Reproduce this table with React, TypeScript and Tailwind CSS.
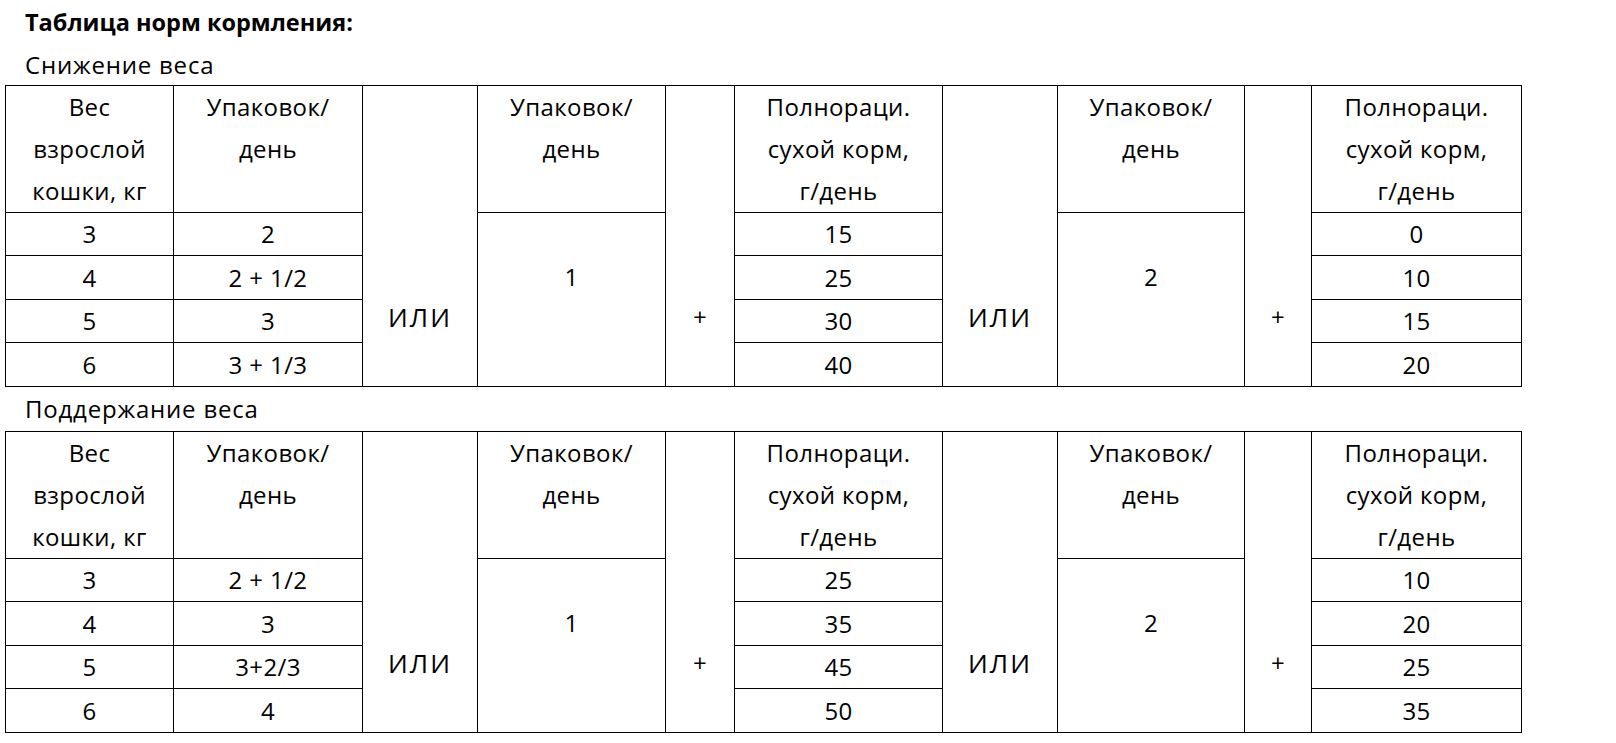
const font = { fontFamily: '"Open Sans", "Noto Sans", sans-serif' };

interface FeedTable {
  weights: string[];
  packs: string[];
  dryWithOne: string[];
  dryWithTwo: string[];
}

const reduction: FeedTable = {
  weights: ['3', '4', '5', '6'],
  packs: ['2', '2 + 1/2', '3', '3 + 1/3'],
  dryWithOne: ['15', '25', '30', '40'],
  dryWithTwo: ['0', '10', '15', '20'],
};

const maintenance: FeedTable = {
  weights: ['3', '4', '5', '6'],
  packs: ['2 + 1/2', '3', '3+2/3', '4'],
  dryWithOne: ['25', '35', '45', '50'],
  dryWithTwo: ['10', '20', '25', '35'],
};

const cell = 'border border-black text-center p-0';
const head = `${cell} align-top leading-[42px]`;
const data = `${cell} align-middle leading-[42px]`;
const tall = `${cell} align-top leading-[42px] pt-[210px]`;
const mid = `${cell} align-top leading-[42px] pt-[43px]`;

function NormTable({ t }: { t: FeedTable }) {
  const heights = ['h-[43px]', 'h-[44px]', 'h-[43px]', 'h-[44px]'];
  return (
    <table className="table-fixed border-collapse w-[1516px] text-[24px] tracking-[0.4px] text-black">
      <colgroup>
        <col className="w-[168px]" />
        <col className="w-[189px]" />
        <col className="w-[115px]" />
        <col className="w-[188px]" />
        <col className="w-[69px]" />
        <col className="w-[208px]" />
        <col className="w-[115px]" />
        <col className="w-[187px]" />
        <col className="w-[67px]" />
        <col className="w-[210px]" />
      </colgroup>
      <tbody>
        <tr className="h-[127px]">
          <td className={head}>
            Вес<br />взрослой<br />кошки, кг
          </td>
          <td className={head}>
            Упаковок/<br />день
          </td>
          <td rowSpan={5} className={`${tall} text-[26px] tracking-[2px]`}>ИЛИ</td>
          <td className={head}>
            Упаковок/<br />день
          </td>
          <td rowSpan={5} className={tall}>+</td>
          <td className={head}>
            Полнораци.<br />сухой корм,<br />г/день
          </td>
          <td rowSpan={5} className={`${tall} text-[26px] tracking-[2px]`}>ИЛИ</td>
          <td className={head}>
            Упаковок/<br />день
          </td>
          <td rowSpan={5} className={tall}>+</td>
          <td className={head}>
            Полнораци.<br />сухой корм,<br />г/день
          </td>
        </tr>
        {t.weights.map((w, i) => (
          <tr key={w} className={heights[i]}>
            <td className={data}>{w}</td>
            <td className={data}>{t.packs[i]}</td>
            {i === 0 && (
              <td rowSpan={4} className={mid}>1</td>
            )}
            <td className={data}>{t.dryWithOne[i]}</td>
            {i === 0 && (
              <td rowSpan={4} className={mid}>2</td>
            )}
            <td className={data}>{t.dryWithTwo[i]}</td>
          </tr>
        ))}
      </tbody>
    </table>
  );
}

export default function App() {
  return (
    <div className="w-[1616px] h-[743px] bg-white text-black overflow-hidden" style={font}>
      <div className="pl-[25px] h-[44px] leading-[44px] text-[23.5px] font-bold">Таблица норм кормления:</div>
      <div className="pl-[25px] h-[41px] leading-[41px] text-[24px] tracking-[0.8px]">Снижение веса</div>
      <div className="pl-[5px]">
        <NormTable t={reduction} />
      </div>
      <div className="pl-[25px] h-[44px] leading-[44px] text-[24px] tracking-[0.8px]">Поддержание веса</div>
      <div className="pl-[5px]">
        <NormTable t={maintenance} />
      </div>
    </div>
  );
}
